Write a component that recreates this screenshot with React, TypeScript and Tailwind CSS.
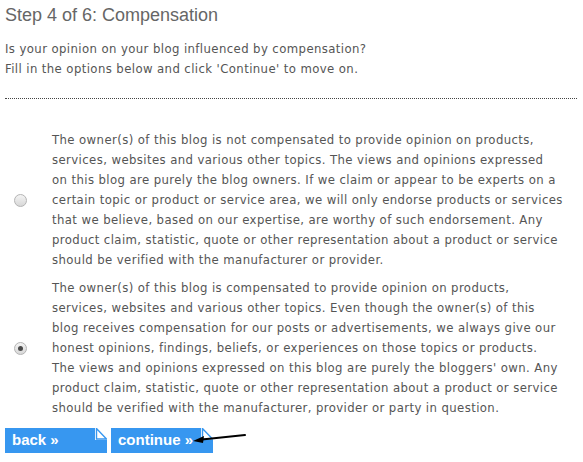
import React from "react";

const opt1 = [
  "The owner(s) of this blog is not compensated to provide opinion on products,",
  "services, websites and various other topics. The views and opinions expressed",
  "on this blog are purely the blog owners. If we claim or appear to be experts on a",
  "certain topic or product or service area, we will only endorse products or services",
  "that we believe, based on our expertise, are worthy of such endorsement. Any",
  "product claim, statistic, quote or other representation about a product or service",
  "should be verified with the manufacturer or provider.",
];

const opt2 = [
  "The owner(s) of this blog is compensated to provide opinion on products,",
  "services, websites and various other topics. Even though the owner(s) of this",
  "blog receives compensation for our posts or advertisements, we always give our",
  "honest opinions, findings, beliefs, or experiences on those topics or products.",
  "The views and opinions expressed on this blog are purely the bloggers' own. Any",
  "product claim, statistic, quote or other representation about a product or service",
  "should be verified with the manufacturer, provider or party in question.",
];

function Radio({ checked }: { checked: boolean }) {
  return (
    <span className="flex h-[13px] w-[13px] items-center justify-center rounded-full border border-[#b4b4b4] bg-gradient-to-b from-[#f4f4f4] to-[#d8d8d8]">
      {checked && <span className="h-[5px] w-[5px] rounded-full bg-[#4a4a4a]" />}
    </span>
  );
}

function Option({ lines, checked }: { lines: string[]; checked: boolean }) {
  return (
    <div className="flex items-center">
      <div className="flex w-[52px] justify-start pl-[14px]">
        <Radio checked={checked} />
      </div>
      <div className="whitespace-nowrap leading-[20px] tracking-[0.4px]">
        {lines.map((l, i) => (
          <div key={i}>{l}</div>
        ))}
      </div>
    </div>
  );
}

function Btn({ label }: { label: string }) {
  return (
    <div className="relative flex h-[25px] w-[102px] items-center bg-[#3797f0] pl-[7px] text-[15px] font-bold text-white [font-family:'Liberation_Sans',Arial,sans-serif]">
      {label}
      <svg className="absolute right-0 top-0" width="12" height="12" viewBox="0 0 12 12">
        <rect x="0" y="0" width="12" height="12" fill="#ffffff" />
        <polygon points="1.5,0.5 1.5,11 11.5,11" fill="#ffffff" stroke="#3797f0" strokeWidth="1.4" />
      </svg>
    </div>
  );
}

export default function App() {
  return (
    <div className="relative h-[462px] w-[583px] bg-white pl-[5px] pr-[6px] text-[13px] text-[#555] [font-family:'DejaVu_Sans_Condensed','DejaVu_Sans',sans-serif]">
      <h1 className="pt-[3px] text-[18px] leading-[24px] text-[#666] [font-family:'Liberation_Sans',Arial,sans-serif]">Step 4 of 6: Compensation</h1>
      <div className="mt-[12px] leading-[20px] tracking-[0.4px]">
        <div>Is your opinion on your blog influenced by compensation?</div>
        <div>Fill in the options below and click 'Continue' to move on.</div>
      </div>
      <div className="mt-[19px] border-b border-dotted border-[#444]" />
      <div className="mt-[31px] flex flex-col gap-[8px] -ml-[5px]">
        <Option lines={opt1} checked={false} />
        <Option lines={opt2} checked={true} />
      </div>
      <div className="mt-[10px] flex gap-[4px]">
        <Btn label="back »" />
        <Btn label="continue »" />
      </div>
      <svg className="absolute left-[190px] top-[430px]" width="60" height="16" viewBox="0 0 60 16">
        <path d="M55 5 L12 9.5" stroke="#000" strokeWidth="2" fill="none" strokeLinecap="round" />
        <polygon points="3,11 14,6 13,13" fill="#000" />
      </svg>
    </div>
  );
}
